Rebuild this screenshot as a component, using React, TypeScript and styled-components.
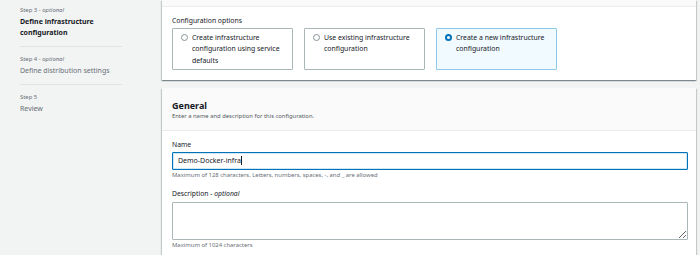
import React from "react";
import styled, { createGlobalStyle } from "styled-components";

const GlobalStyle = createGlobalStyle`
  html, body {
    margin: 0;
    padding: 0;
    background: #f2f3f3;
    font-family: "Noto Sans", "Open Sans", sans-serif;
    color: #16191f;
    overflow: hidden;
  }
`;

const Page = styled.div`
  display: flex;
  width: 700px;
  height: 255px;
  overflow: hidden;
`;

const Sidebar = styled.nav`
  width: 102px;
  padding: 0 40px 0 20px;
  flex-shrink: 0;
`;

const Step = styled.div<{ $first?: boolean }>`
  padding: ${(p) => (p.$first ? "4px" : "6px")} 0 8px;
  border-top: ${(p) => (p.$first ? "none" : "1px solid #dfe3e3")};
`;

const StepLabel = styled.div`
  font-size: 5.9px;
  line-height: 12px;
  color: #687078;
  em {
    font-style: italic;
  }
`;

const StepTitle = styled.div<{ $active?: boolean }>`
  font-size: 7px;
  line-height: 11px;
  color: ${(p) => (p.$active ? "#16191f" : "#687078")};
  font-weight: ${(p) => (p.$active ? 700 : 400)};
`;

const Main = styled.main`
  width: 534px;
  display: flex;
  flex-direction: column;
  gap: 8px;
`;

const Card = styled.section`
  background: #fff;
  box-shadow: 0 1px 1px 0 rgba(0, 28, 36, 0.3), 1px 1px 1px 0 rgba(0, 28, 36, 0.15),
    -1px 1px 1px 0 rgba(0, 28, 36, 0.15);
`;

const CardHeader = styled.header<{ $strip?: boolean }>`
  background: #fafafa;
  border-bottom: 1px solid #eaeded;
  padding: ${(p) => (p.$strip ? "0" : "11px 10px 9px")};
  height: ${(p) => (p.$strip ? "6px" : "auto")};
`;

const CardTitle = styled.h2`
  margin: 0;
  font-size: 9px;
  line-height: 13px;
  font-weight: 700;
  color: #16191f;
`;

const CardDesc = styled.p`
  margin: 0;
  font-size: 5.85px;
  line-height: 9px;
  color: #545b64;
`;

const CardBody = styled.div<{ $pt: number; $pb: number }>`
  padding: ${(p) => p.$pt}px 8px ${(p) => p.$pb}px 10px;
`;

const FieldLabel = styled.div`
  font-size: 6.8px;
  line-height: 11px;
  color: #16191f;
  em {
    font-style: italic;
  }
`;

const Tiles = styled.div`
  display: flex;
  gap: 11px;
  margin-top: 2px;
`;

const Tile = styled.label<{ $selected?: boolean }>`
  box-sizing: border-box;
  width: 121px;
  height: 42px;
  padding: 3px 6px 3px 8px;
  display: flex;
  gap: 4px;
  align-items: flex-start;
  border: 1px solid ${(p) => (p.$selected ? "#8cc8e8" : "#aab7b8")};
  background: ${(p) => (p.$selected ? "#f1faff" : "#fff")};
  border-radius: 1px;
`;

const Radio = styled.span<{ $checked?: boolean }>`
  box-sizing: border-box;
  flex-shrink: 0;
  width: 7px;
  height: 7px;
  margin-top: 2px;
  border-radius: 50%;
  background: #fff;
  border: ${(p) => (p.$checked ? "2px solid #0073bb" : "1px solid #879596")};
`;

const TileText = styled.span`
  font-size: 6.9px;
  line-height: 11.3px;
  color: #16191f;
`;

const InputBox = styled.div`
  box-sizing: border-box;
  margin-top: 1.5px;
  width: 516px;
  height: 18px;
  border: 1px solid #0073bb;
  box-shadow: inset 0 0 0 0.5px rgba(0, 115, 187, 0.35);
  border-radius: 1px;
  padding: 0 5px;
  display: flex;
  align-items: center;
  font-size: 7px;
  color: #16191f;
`;

const Caret = styled.span`
  display: inline-block;
  width: 0;
  height: 9px;
  border-left: 1px solid #16191f;
  margin-left: 0.5px;
`;

const Hint = styled.div<{ $mt: number }>`
  margin-top: ${(p) => p.$mt}px;
  font-size: 5.9px;
  line-height: 9px;
  color: #687078;
`;

const Field = styled.div<{ $mt: number }>`
  margin-top: ${(p) => p.$mt}px;
`;

const TextArea = styled.textarea`
  display: block;
  box-sizing: border-box;
  margin: 2.5px 0 0;
  width: 516px;
  height: 38px;
  border: 1px solid #aab7b8;
  border-radius: 1px;
  resize: vertical;
  font-family: inherit;
  font-size: 7px;
  outline: none;
`;

const steps = [
  { label: "Step 3", optional: true, title: "Define infrastructure configuration", active: true },
  { label: "Step 4", optional: true, title: "Define distribution settings" },
  { label: "Step 5", optional: false, title: "Review" },
];

const options = [
  { text: "Create infrastructure configuration using service defaults" },
  { text: "Use existing infrastructure configuration" },
  { text: "Create a new infrastructure configuration", selected: true },
];

export default function App() {
  return (
    <>
      <GlobalStyle />
      <Page>
        <Sidebar>
          {steps.map((s, i) => (
            <Step key={s.label} $first={i === 0}>
              <StepLabel>
                {s.label}
                {s.optional && (
                  <>
                    {" - "}
                    <em>optional</em>
                  </>
                )}
              </StepLabel>
              <StepTitle $active={s.active}>{s.title}</StepTitle>
            </Step>
          ))}
        </Sidebar>
        <Main>
          <Card>
            <CardHeader $strip />
            <CardBody $pt={8} $pb={10}>
              <FieldLabel>Configuration options</FieldLabel>
              <Tiles>
                {options.map((o) => (
                  <Tile key={o.text} $selected={o.selected}>
                    <Radio $checked={o.selected} />
                    <TileText>{o.text}</TileText>
                  </Tile>
                ))}
              </Tiles>
            </CardBody>
          </Card>
          <Card>
            <CardHeader>
              <CardTitle>General</CardTitle>
              <CardDesc>Enter a name and description for this configuration.</CardDesc>
            </CardHeader>
            <CardBody $pt={8} $pb={20}>
              <FieldLabel>Name</FieldLabel>
              <InputBox>
                Demo-Docker-infra
                <Caret />
              </InputBox>
              <Hint $mt={1.5}>
                Maximum of 128 characters. Letters, numbers, spaces, -, and _ are allowed
              </Hint>
              <Field $mt={8}>
                <FieldLabel>
                  Description - <em>optional</em>
                </FieldLabel>
                <TextArea />
              </Field>
              <Hint $mt={1}>Maximum of 1024 characters</Hint>
            </CardBody>
          </Card>
        </Main>
      </Page>
    </>
  );
}
